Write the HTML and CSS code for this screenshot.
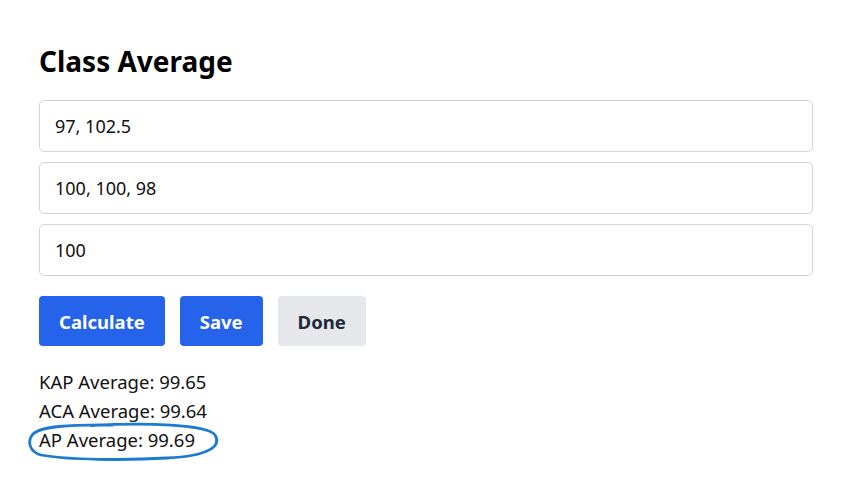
FILE: index.html
```html
<!DOCTYPE html>
<html>
<head>
<meta charset="utf-8">
<link rel="stylesheet" href="styles.css">
</head>
<body>
<main class="page">
  <h1 class="title">Class Average</h1>
  <div class="fields">
    <input class="field" type="text" value="97, 102.5">
    <input class="field" type="text" value="100, 100, 98">
    <input class="field" type="text" value="100">
  </div>
  <div class="actions">
    <button class="btn btn-primary">Calculate</button>
    <button class="btn btn-primary">Save</button>
    <button class="btn btn-muted">Done</button>
  </div>
  <div class="results">
    <p class="result">KAP Average: 99.65</p>
    <p class="result">ACA Average: 99.64</p>
    <p class="result result-marked"><span class="result-text">AP Average: 99.69</span><svg class="circle" viewBox="0 0 194 40" width="194" height="40" aria-hidden="true"><path d="M64 3.5 C120 0.5 180 2.5 188 13 C195 24 182 34 140 36 C100 38.5 40 38 14 33 C2 29.5 0 19 6 12 C14 4.5 40 2.5 86 3" fill="none" stroke="#1b7bd3" stroke-width="2.8" stroke-linecap="round"/></svg></p>
  </div>
</main>
</body>
</html>
```

FILE: styles.css
```css
* { box-sizing: border-box; }
html, body { margin: 0; padding: 0; background: #ffffff; }
body {
  font-family: "Noto Sans", "Open Sans", sans-serif;
  color: #111111;
  min-height: 491px;
}
.page {
  padding: 42px 0 30px 39px;
  width: 813px;
}
.title {
  margin: 0 0 20px 0;
  font-size: 28px;
  line-height: 38px;
  font-weight: 700;
  color: #000;
}
.fields {
  display: flex;
  flex-direction: column;
  gap: 10px;
}
.field {
  display: block;
  width: 774px;
  height: 52px;
  padding: 0 15px;
  border: 1px solid #d4d4d8;
  border-radius: 5px;
  font-family: inherit;
  font-size: 18px;
  color: #111;
  background: #fff;
  outline: none;
}
.actions {
  display: flex;
  gap: 15px;
  margin-top: 20px;
}
.btn {
  height: 50px;
  padding: 0 20px;
  border: none;
  border-radius: 4px;
  font-family: inherit;
  font-size: 18.5px;
  font-weight: 700;
}
.btn-primary { background: #2563eb; color: #fff; }
.btn-muted { background: #e5e7eb; color: #1f2937; }
.results {
  margin-top: 21px;
}
.result {
  margin: 0;
  font-size: 18.5px;
  line-height: 29px;
  color: #111;
}
.result-marked {
  position: relative;
  display: inline-block;
}
.circle {
  position: absolute;
  left: -12px;
  top: -3px;
  overflow: visible;
}
```
